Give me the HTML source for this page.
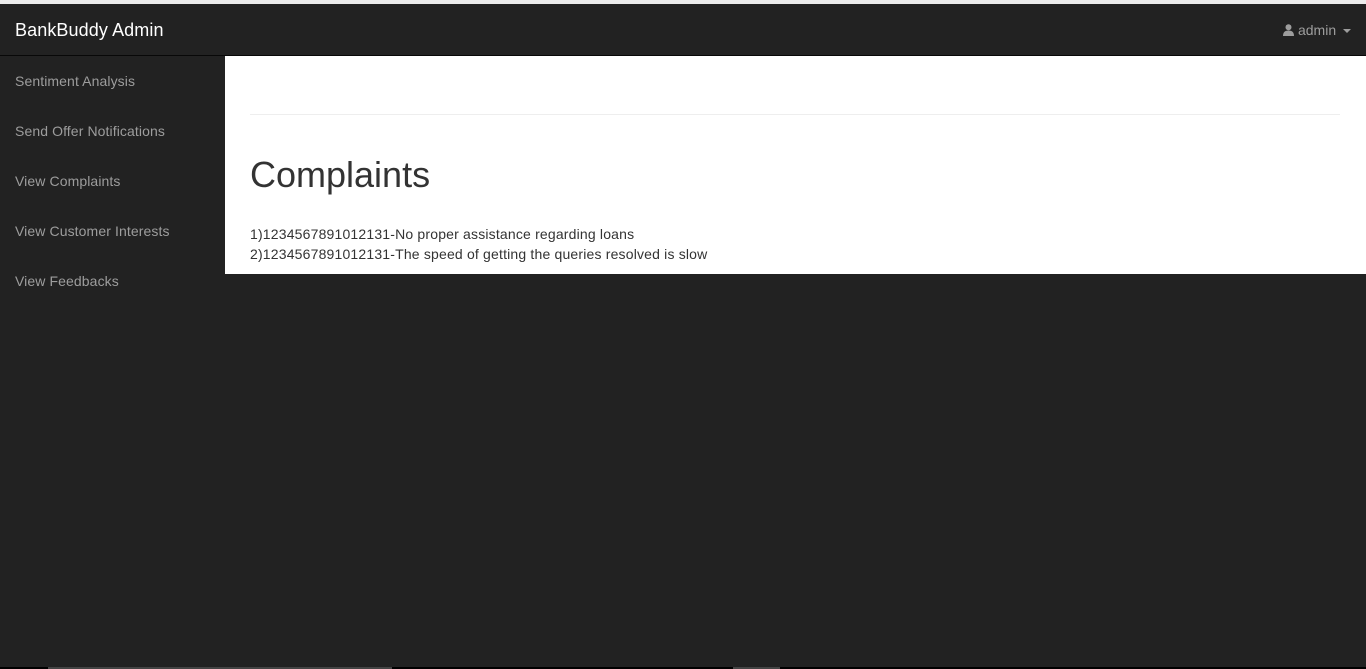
<!DOCTYPE html>
<html><head><style>
html,body{margin:0;padding:0;width:1366px;height:669px;overflow:hidden;background:#222;font-family:"Liberation Sans",sans-serif;}
.top{position:absolute;left:0;top:0;width:1366px;height:4px;background:#ececec;}
.nav{position:absolute;left:0;top:4px;width:1366px;height:51px;background:#222;border-bottom:1px solid #080808;}
.brand{position:absolute;left:15px;top:16px;color:#fff;font-size:18px;letter-spacing:0.1px;}
.user{position:absolute;right:15px;top:18px;color:#9d9d9d;font-size:14px;}
.side a{position:absolute;left:15px;color:#9d9d9d;font-size:14px;text-decoration:none;letter-spacing:0.1px;}
.main{position:absolute;left:225px;top:56px;width:1141px;height:218px;background:#fff;}
hr{position:absolute;left:25px;top:58px;width:1090px;margin:0;border:0;border-top:1px solid #eee;}
h1{position:absolute;left:25px;top:98px;margin:0;font-weight:normal;font-size:36px;color:#333;}
.t{position:absolute;left:25px;font-size:14px;color:#333;letter-spacing:0.18px;}
.bot{position:absolute;left:0;top:667px;width:1366px;height:2px;background:#000;}
</style></head><body>
<div class="top"></div>
<div class="nav"><div class="brand">BankBuddy Admin</div>
<div class="user"><svg width="11" height="12" viewBox="0 0 11 12" style="vertical-align:-1px"><circle cx="5.5" cy="3.2" r="3" fill="#9d9d9d"/><path d="M0 12 Q0 6.5 5.5 6.5 Q11 6.5 11 12Z" fill="#9d9d9d"/></svg> admin <span style="display:inline-block;border-left:4px solid transparent;border-right:4px solid transparent;border-top:4px solid #9d9d9d;vertical-align:middle;margin-left:3px"></span></div></div>
<div class="side">
<a style="top:73px">Sentiment Analysis</a>
<a style="top:123px">Send Offer Notifications</a>
<a style="top:173px">View Complaints</a>
<a style="top:223px">View Customer Interests</a>
<a style="top:273px">View Feedbacks</a>
</div>
<div class="main"><hr><h1>Complaints</h1>
<div class="t" style="top:170px">1)1234567891012131-No proper assistance regarding loans</div>
<div class="t" style="top:190px">2)1234567891012131-The speed of getting the queries resolved is slow</div>
</div>
<div class="bot"><div style="position:absolute;left:48px;width:344px;height:2px;background:#444"></div><div style="position:absolute;left:733px;width:47px;height:2px;background:#444"></div></div>
</body></html>
